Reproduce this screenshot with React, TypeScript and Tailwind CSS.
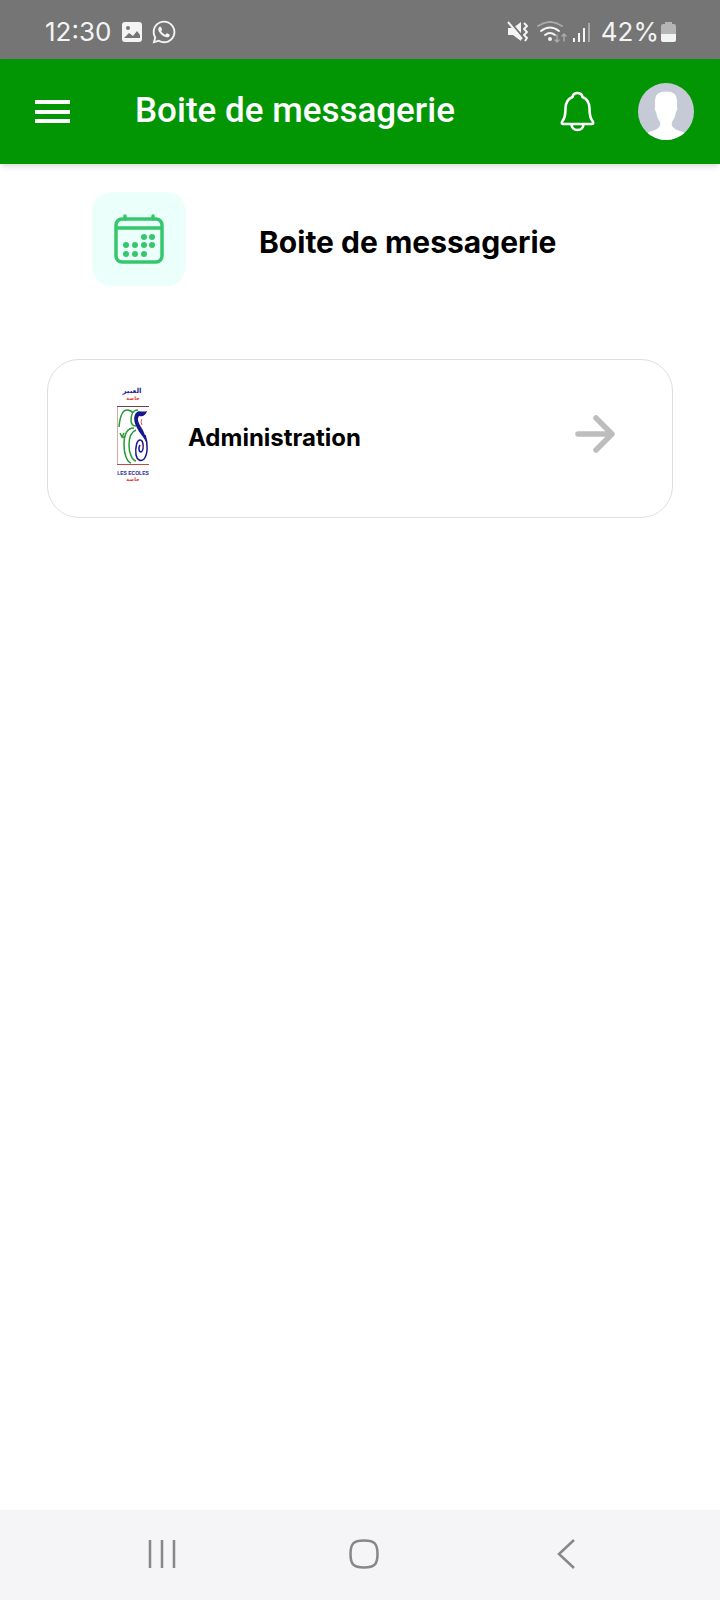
import { FaWhatsapp } from "react-icons/fa";

function StatusBar() {
  return (
    <div className="flex h-[59px] items-center justify-between bg-[#757575] pt-1 pr-11 pl-[45px] font-['Inter','Liberation_Sans',sans-serif] text-[26px] text-[#f4f4f4]">
      <div className="flex items-center gap-2">
        <span className="mr-0.5">12:30</span>
        <svg viewBox="0 0 22 22" className="h-[22px] w-[22px]">
          <path
            fill="currentColor"
            fillRule="evenodd"
            d="M4 1h14a3 3 0 0 1 3 3v14a3 3 0 0 1-3 3H4a3 3 0 0 1-3-3V4a3 3 0 0 1 3-3ZM7 5a2 2 0 1 0 0 4 2 2 0 0 0 0-4ZM3 17l5-5 4 3 4-5 3 4v3Z"
          />
        </svg>
        <FaWhatsapp className="h-[26px] w-[26px]" />
      </div>
      <div className="flex items-center">
        <svg viewBox="0 0 22 22" className="mr-2 h-[22px] w-[22px]" fill="none">
          <path fill="currentColor" d="M1 7h5l8-6v19l-8-6H1Z" />
          <path stroke="#757575" strokeWidth="2" d="M3 1l12 14" />
          <path stroke="currentColor" strokeWidth="2" d="M1 1l14 17" />
          <path stroke="currentColor" strokeWidth="2" d="M17 2l3 3-3 3 3 3-3 3 3 3-2 3" strokeLinejoin="round" />
        </svg>
        <svg viewBox="0 0 30 22" className="mr-1.5 h-[22px] w-[30px]" fill="none" strokeLinecap="round">
          <path stroke="#a9a9a9" strokeWidth="2" d="M1 5q12-8 24 0" />
          <path stroke="currentColor" strokeWidth="2" d="M4 10q9-7 18 0M8 14q5-4 10 0" />
          <circle cx="13" cy="18" r="2" fill="currentColor" />
          <path stroke="#a9a9a9" strokeWidth="1.5" d="M20 14v7M18 19l2 2 2-2M27 20v-7M25 15l2-2 2 2" />
        </svg>
        <svg viewBox="0 0 18 22" className="mr-2.5 h-[22px] w-[18px]">
          <path fill="currentColor" d="M0 17h2v4H0zM5 12h2v9H5zM10 7h2v14h-2z" />
          <path fill="#a9a9a9" d="M15 2h2v19h-2z" />
        </svg>
        <span className="mr-0.5">42%</span>
        <svg viewBox="0 0 15 20" className="h-5 w-[15px]">
          <path fill="#b5b5b5" d="M4 0h7v2h2q2 0 2 2v9H0V4q0-2 2-2h2Z" />
          <path fill="currentColor" d="M0 12h15v6q0 2-2 2H2q-2 0-2-2Z" />
        </svg>
      </div>
    </div>
  );
}

function Header() {
  return (
    <header className="flex h-[105px] items-center bg-[#029605] pr-[26px] pl-[35px] text-white shadow-md">
      <button aria-label="Menu">
        <svg viewBox="0 0 35 24" className="h-6 w-[35px]">
          <path fill="currentColor" d="M0 0h35v4H0zM0 10h35v4H0zM0 19h35v4H0z" />
        </svg>
      </button>
      <h1 className="ml-[65px] flex-1 pb-0.5 font-['Roboto','Liberation_Sans',sans-serif] text-[35px] leading-10 font-medium">
        Boite de messagerie
      </h1>
      <button aria-label="Notifications" className="mr-[43px]">
        <svg viewBox="0 0 35 42" className="h-[42px] w-[35px]" fill="none" stroke="currentColor" strokeWidth="2.6" strokeLinejoin="round">
          <path d="M17.5 2c-2.5 0-4.500 1.300-5 4-4.500 1.800-7 6-7 11.500 0 6-.5 9.500-3 12.500-1.200 1.600-1 3 1 3h28c2 0 2.200-1.400 1-3-2.500-3-3-6.500-3-12.500 0-5.500-2.500-9.700-7-11.500-.5-2.700-2.500-4-5-4Z" />
          <path d="M11.500 33c0 3.500 2.500 6 6 6s6-2.500 6-6" />
        </svg>
      </button>
      <button aria-label="Profil">
        <svg viewBox="0 0 56 57" className="h-[57px] w-14">
          <defs>
            <clipPath id="avatar">
              <ellipse cx="28" cy="28.5" rx="28" ry="28.5" />
            </clipPath>
          </defs>
          <g clipPath="url(#avatar)">
            <path fill="#c5cad6" d="M0 0h56v57H0z" />
            <path
              fill="#fff"
              d="M28 8.500q11 0 11 8.500v7q1 2-1 5-1 6-4 10-2 6 8 9 6 2 8 5v6H6v-6q2-3 8-5 10-3 8-9-3-4-4-10-2-3-1-5v-7q0-8.500 11-8.500Z"
            />
          </g>
        </svg>
      </button>
    </header>
  );
}

function CalendarIcon() {
  return (
    <svg viewBox="0 0 50 50" className="h-[50px] w-[50px]" fill="none" stroke="#36c76d" strokeWidth="3.5">
      <rect x="2" y="5" width="46" height="43" rx="6" />
      <path d="M2 14h46" />
      <path d="M11 5V2M39 5V2" strokeLinecap="round" />
      <g fill="#36c76d" stroke="none">
        <circle cx="30" cy="23" r="3" />
        <circle cx="38" cy="23" r="3" />
        <circle cx="12" cy="31" r="3" />
        <circle cx="21" cy="31" r="3" />
        <circle cx="30" cy="31" r="3" />
        <circle cx="38" cy="31" r="3" />
        <circle cx="12" cy="40" r="3" />
        <circle cx="21" cy="40" r="3" />
        <circle cx="30" cy="40" r="3" />
      </g>
    </svg>
  );
}

function SchoolLogo() {
  return (
    <svg viewBox="0 0 32 98" className="h-[98px] w-8" fill="none" textAnchor="middle">
      <text x="15" y="8" fill="#22229a" className="font-['DejaVu_Sans',sans-serif] text-[7px] font-bold">
        العبير
      </text>
      <text x="16" y="15" fill="#e03434" className="font-['DejaVu_Sans',sans-serif] text-[5px] font-bold">
        خاصة
      </text>
      <path stroke="#6d4050" d="M0 21.500h32" />
      <path stroke="#dca8a8" d="M.5 22v57" />
      <path stroke="#c04848" d="M0 79.500h32" />
      <path
        stroke="#279a32"
        strokeWidth="1.500"
        d="M2 42C3 31 6 25 10 25q4 0 6 3M21 25c-5 0-7 5-7 10 0 4 2 6 5 6M3 48l2 4 2-4M6 53l2-2M17 43C10 43 7 50 7 60c0 9 3 17 7 18M19 45c-5 2-7 8-7 15 0 8 3 15 7 16"
      />
      <path stroke="#17178f" strokeWidth="1.500" d="M28 50c3 9 3 19-1 24-3 3-7 1-8-4-1-8 1-15 4-15 4 0 4 11 1 12-2 0-3-4-1-7" />
      <path fill="#17178f" d="M19 28c3-4 6 0 11-2-1 4-4 6-8 5-2 3-1 6 2 11 3 5 5 9 5 15-2-5-7-9-9-14-3-6-4-11-1-15Z" />
      <path stroke="#e06060" d="M25 34l-1 3 1 3M25 60l1 3" />
      <text x="16" y="90" fill="#24249a" className="font-['Liberation_Sans_Narrow','Liberation_Sans',sans-serif] text-[5px] font-bold">
        LES ECOLES
      </text>
      <text x="16" y="96" fill="#e03434" className="font-['DejaVu_Sans',sans-serif] text-[5px] font-bold">
        خاصة
      </text>
    </svg>
  );
}

export default function App() {
  return (
    <div className="flex min-h-screen flex-col bg-white">
      <StatusBar />
      <Header />
      <main className="flex-1 px-[47px] pt-7 font-['Inter','Liberation_Sans',sans-serif] text-black">
        <div className="flex items-center pl-[45px]">
          <div className="flex h-[94px] w-[94px] items-center justify-center rounded-[20px] bg-[#ebfffb]">
            <CalendarIcon />
          </div>
          <h2 className="ml-[73px] pt-1.5 text-[30px] leading-10 font-bold">Boite de messagerie</h2>
        </div>
        <a
          href="#administration"
          className="mt-[73px] flex h-[159px] items-center rounded-[32px] border border-[#dedede] pr-14 pb-2.5 pl-[69px]"
        >
          <SchoolLogo />
          <span className="ml-[39px] flex-1 pt-2 text-2xl font-bold">Administration</span>
          <svg viewBox="0 0 41 38" className="h-[38px] w-[41px] text-[#bdbdbd]" fill="none" stroke="currentColor" strokeWidth="5.5" strokeLinecap="round" strokeLinejoin="round">
            <path d="M3 19h33M21 3l16 16-16 16" />
          </svg>
        </a>
      </main>
      <nav className="flex h-[90px] items-center justify-between bg-[#f5f5f7] pr-[139px] pb-0.5 pl-[147px] text-[#87878a]">
        <button aria-label="Applications récentes">
          <svg viewBox="0 0 30 30" className="h-[30px] w-[30px]" fill="none" stroke="currentColor" strokeWidth="2.5">
            <path d="M3 1v28M15 1v28M27 1v28" />
          </svg>
        </button>
        <button aria-label="Accueil">
          <svg viewBox="0 0 30 30" className="h-[30px] w-[30px]" fill="none" stroke="currentColor" strokeWidth="2.5">
            <path d="M15 1.500c10.500 0 13.500 3 13.500 13.500S25.500 28.500 15 28.500 1.500 25.500 1.500 15 4.500 1.500 15 1.500Z" />
          </svg>
        </button>
        <button aria-label="Retour" className="flex w-[30px] justify-center">
          <svg viewBox="0 0 18 30" className="h-[30px] w-[18px]" fill="none" stroke="currentColor" strokeWidth="2.5">
            <path d="M17 1L2 15l15 14" />
          </svg>
        </button>
      </nav>
    </div>
  );
}
